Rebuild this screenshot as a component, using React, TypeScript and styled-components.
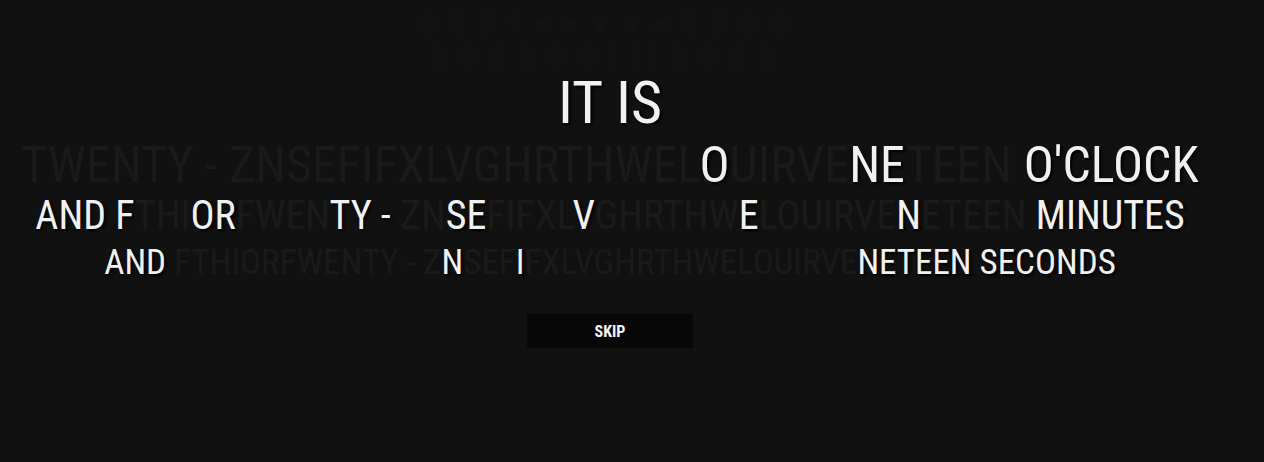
import React from "react";
import styled, { createGlobalStyle } from "styled-components";

const Global = createGlobalStyle`
  html, body { margin: 0; padding: 0; background: #111111; }
  body { font-family: "Roboto Condensed", Roboto, "Liberation Sans", sans-serif; }
`;

const Page = styled.div`
  width: 1220px;
  height: 462px;
  display: flex;
  flex-direction: column;
  align-items: center;
  position: relative;
  overflow: hidden;
`;

const Ghost = styled.div<{ $top: number }>`
  position: absolute;
  top: ${(p) => p.$top}px;
  left: 0;
  right: 0;
  text-align: center;
  font-size: 26px;
  line-height: 1;
  letter-spacing: 14px;
  color: #131313;
  font-stretch: 75%;
`;

const Line = styled.div<{ $size: number; $mt: number }>`
  font-size: ${(p) => p.$size}px;
  margin-top: ${(p) => p.$mt}px;
  line-height: 1;
  white-space: pre;
  font-stretch: 75%;
  font-weight: 400;
  color: #1a1a1a;
`;

const On = styled.span`
  color: #f1f1f1;
  text-shadow: 2px 2px 3px #000;
`;

const Skip = styled.button`
  margin-top: 34px;
  width: 166px;
  height: 34px;
  padding: 0;
  border: none;
  background: #070707;
  color: #f4f4f4;
  font-family: "Roboto Condensed", Roboto, sans-serif;
  font-stretch: 75%;
  font-weight: 700;
  font-size: 16px;
  cursor: pointer;
`;

type Seg = [string, boolean];

const hourLine: Seg[] = [
  ["TWENTY - ZNSEFIFXLVGHRTHWEL", false],
  ["O", true],
  ["UIRVE", false],
  ["NE", true],
  ["TEEN ", false],
  ["O'CLOCK", true],
];

const minuteLine: Seg[] = [
  ["AND F", true],
  ["THI", false],
  ["OR", true],
  ["FWEN", false],
  ["TY -", true],
  [" ZN", false],
  ["SE", true],
  ["FIFXL", false],
  ["V", true],
  ["GHRTHW", false],
  ["E", true],
  ["LOUIRVE", false],
  ["N", true],
  ["ETEEN", false],
  [" MINUTES", true],
];

const secondLine: Seg[] = [
  ["AND", true],
  [" FTHIORFWENTY - Z", false],
  ["N", true],
  ["SEF", false],
  ["I", true],
  ["FXLVGHRTHWELOUIRVE", false],
  ["NETEEN SECONDS", true],
];

const render = (segs: Seg[]) =>
  segs.map(([t, on], i) => (on ? <On key={i}>{t}</On> : <span key={i}>{t}</span>));

export default function App() {
  return (
    <>
      <Global />
      <Page>
        <Ghost $top={11}>OOO?●●●●●OOOO</Ghost>
        <Ghost $top={44}>OOOOOOIIIOOOO</Ghost>
        <Line $size={60} $mt={73}>
          <On>IT IS</On>
        </Line>
        <Line $size={50} $mt={7}>{render(hourLine)}</Line>
        <Line $size={40} $mt={6}>{render(minuteLine)}</Line>
        <Line $size={35} $mt={9}>{render(secondLine)}</Line>
        <Skip>SKIP</Skip>
      </Page>
    </>
  );
}
